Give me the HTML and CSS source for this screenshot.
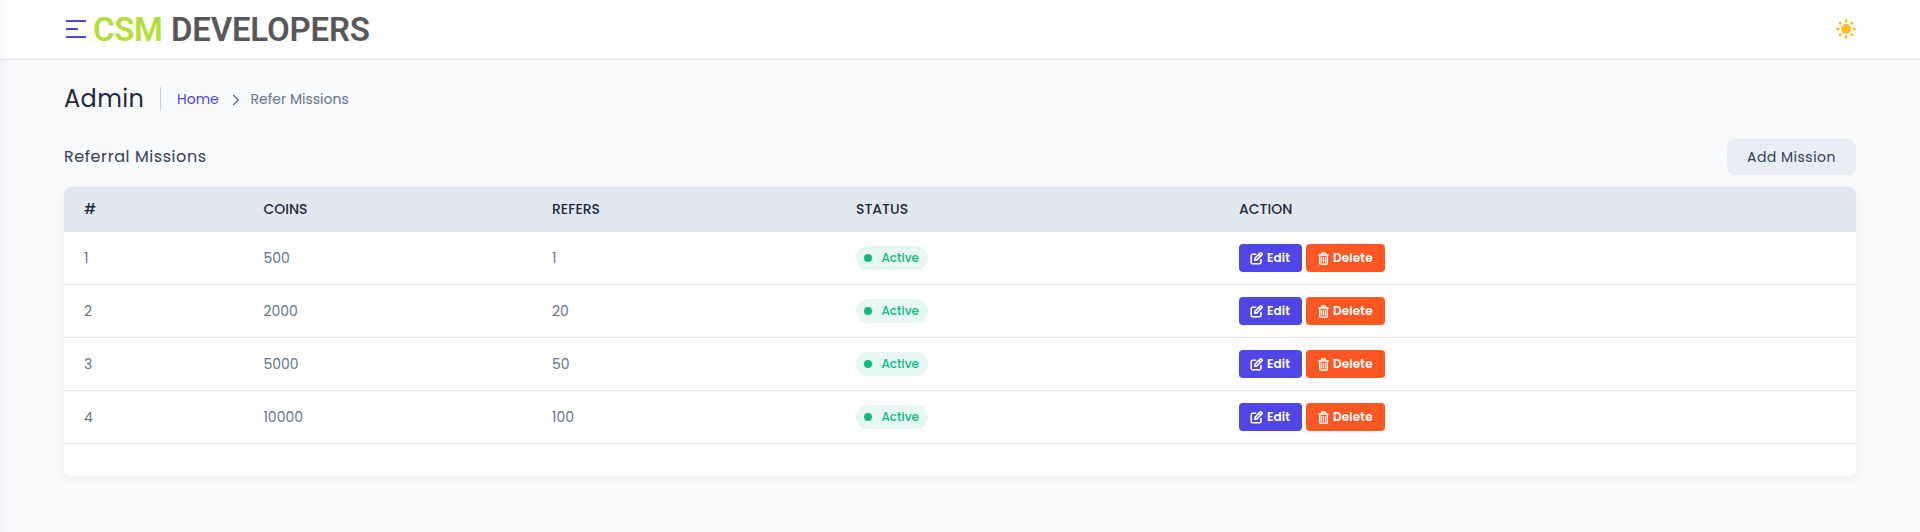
FILE: index.html
```html
<!DOCTYPE html>
<html lang="en">
<head>
<meta charset="utf-8">
<title>Refer Missions</title>
<link rel="stylesheet" href="styles.css">
</head>
<body>
<svg class="sprite" aria-hidden="true">
  <symbol id="edit" viewBox="0 0 16 16" fill="none" stroke="currentColor" stroke-width="1.9" stroke-linecap="round" stroke-linejoin="round">
    <path d="M7 2.8H3.2A1.7 1.7 0 0 0 1.5 4.5v8.3a1.7 1.7 0 0 0 1.7 1.7h8.6a1.7 1.7 0 0 0 1.7-1.7V9.3"/>
    <path d="M5.8 10.2l.5-2.7 6.1-6.1a1.25 1.25 0 0 1 1.8 0l.4.4a1.25 1.25 0 0 1 0 1.8L8.5 9.7z M11 3l2 2"/>
  </symbol>
  <symbol id="trash" viewBox="0 0 14 16" fill="none" stroke="currentColor" stroke-width="1.9" stroke-linecap="round" stroke-linejoin="round">
    <path d="M1 3.6h12M4 3.4l1-2.3h4l1 2.3M2.2 4v9.6a1.6 1.6 0 0 0 1.6 1.6h6.4a1.6 1.6 0 0 0 1.6-1.6V4"/>
    <path d="M4.8 6.5v6M7 6.5v6M9.2 6.5v6" stroke-width="1.3"/>
  </symbol>
</svg>
<div class="edge"></div>
<header class="topbar">
  <div class="brand">
    <span class="burger"><i></i><i class="short"></i><i></i></span>
    <div class="logo"><span class="csm">CSM</span><span class="dev">DEVELOPERS</span></div>
  </div>
  <svg class="sun" viewBox="0 0 20 20" fill="#fbbd23">
    <circle cx="10" cy="10" r="5"/>
    <g stroke="#fbbd23" stroke-width="2.5" stroke-linecap="round">
      <path d="M10 1.4v1M10 17.6v1M1.4 10h1M17.6 10h1M4 4l.5.5M15.5 15.5l.5.5M4 16l.5-.5M15.5 4.5l.5-.5"/>
    </g>
  </svg>
</header>
<main>
  <div class="crumbs">
    <h1>Admin</h1>
    <span class="rule"></span>
    <a class="home">Home</a>
    <svg class="chevron" viewBox="0 0 8 12" fill="none" stroke="#64748b" stroke-width="1.4" stroke-linecap="round" stroke-linejoin="round"><path d="M1.5 1.2L6.3 6l-4.8 4.8"/></svg>
    <span class="here">Refer Missions</span>
  </div>
  <div class="heading">
    <h2>Referral Missions</h2>
    <button class="add"><span>Add Mission</span></button>
  </div>
  <section class="card">
    <div class="row head"><span>#</span><span class="coins">COINS</span><span class="refers">REFERS</span><span class="status">STATUS</span><span class="action">ACTION</span></div>
    <div class="row"><span>1</span><span>500</span><span>1</span><span><b class="badge"><i></i>Active</b></span><span class="btns"><b class="btn edit"><svg><use href="#edit"/></svg>Edit</b><b class="btn delete"><svg><use href="#trash"/></svg>Delete</b></span></div>
    <div class="row"><span>2</span><span>2000</span><span>20</span><span><b class="badge"><i></i>Active</b></span><span class="btns"><b class="btn edit"><svg><use href="#edit"/></svg>Edit</b><b class="btn delete"><svg><use href="#trash"/></svg>Delete</b></span></div>
    <div class="row"><span>3</span><span>5000</span><span>50</span><span><b class="badge"><i></i>Active</b></span><span class="btns"><b class="btn edit"><svg><use href="#edit"/></svg>Edit</b><b class="btn delete"><svg><use href="#trash"/></svg>Delete</b></span></div>
    <div class="row"><span>4</span><span>10000</span><span>100</span><span><b class="badge"><i></i>Active</b></span><span class="btns"><b class="btn edit"><svg><use href="#edit"/></svg>Edit</b><b class="btn delete"><svg><use href="#trash"/></svg>Delete</b></span></div>
  </section>
</main>
</body>
</html>
```
FILE: styles.css
```css
* { box-sizing: border-box; }
body { margin: 0; height: 532px; overflow: hidden; background: #f8fafc; font-family: Poppins, Inter, sans-serif; font-size: 14px; color: #64748b; -webkit-font-smoothing: antialiased; }
h1, h2 { margin: 0; font-weight: 400; white-space: nowrap; }
.sprite { position: absolute; width: 0; height: 0; }
.edge { position: absolute; left: 0; top: 0; width: 12px; height: 532px; background: linear-gradient(90deg, rgba(60,70,90,.035), rgba(60,70,90,0)); }
.topbar { height: 60px; padding: 0 64px 0 66px; display: flex; justify-content: space-between; align-items: center; background: #fff; border-bottom: 1px solid #e5e8ee; }
.brand { display: flex; align-items: center; height: 58px; align-self: flex-start; }
.burger { width: 20px; height: 18px; display: flex; flex-direction: column; justify-content: space-between; margin-right: 7px; }
.burger i { height: 2px; background: #4f46e5; }
.burger .short { width: 12px; }
.logo { display: flex; padding-top: 2px; font: 600 33px/40px Roboto, sans-serif; white-space: nowrap; }
.csm { width: 78px; color: #b3df38; letter-spacing: -.4px; }
.dev { color: #58585a; letter-spacing: -.2px; }
.sun { width: 20px; height: 20px; margin-top: -1px; }
main { padding: 0 64px; }
.crumbs { height: 79px; display: flex; align-items: center; }
h1 { width: 96px; font-size: 24px; line-height: 32px; margin-top: -1px; color: #1e293b; letter-spacing: .4px; }
.rule { width: 1px; height: 24px; background: #cbd5e1; margin: -2px 16px 0 0; }
.home { width: 54.5px; color: #4f46e5; }
.chevron { width: 8px; height: 12px; margin-right: 11px; }
.heading { height: 36px; display: flex; justify-content: space-between; align-items: center; }
h2 { font-size: 16px; line-height: 24px; margin-top: -1px; color: #334155; letter-spacing: .57px; }
.add { width: 129px; height: 36px; padding: 0; border: 0; border-radius: 8px; background: #e9edf4; color: #334155; font: 400 14px/20px Poppins, Inter, sans-serif; letter-spacing: .5px; white-space: nowrap; }
.card { height: 289px; margin-top: 12px; border-radius: 8px; background: #fff; overflow: hidden; box-shadow: 0 3px 10px rgba(48,46,56,.06); }
.row { height: 53px; display: grid; grid-template-columns: 179.4px 288.6px 304px 383px 1fr; align-items: center; padding-left: 20px; border-bottom: 1px solid #e2e8f0; }
.head { height: 45px; border: 0; background: #e2e8f0; color: #1e293b; font-weight: 500; }
.badge { display: inline-flex; width: 72px; height: 24px; align-items: center; border-radius: 12px; padding-left: 8px; background: #e7f8f2; color: #10b981; font-size: 12px; font-weight: 500; vertical-align: middle; }
.badge i { width: 8px; height: 8px; border-radius: 50%; background: #10b981; margin-right: 9.5px; }
.btns { display: flex; gap: 4px; }
.btn { height: 28px; border-radius: 4px; display: flex; align-items: center; color: #fff; font-size: 12px; font-weight: 600; letter-spacing: .15px; }
.btn svg { height: 13px; flex: none; }
.edit { width: 63px; padding-left: 11px; background: #4f46e5; }
.edit svg { width: 13px; margin-right: 4px; }
.delete { width: 79px; padding-left: 12px; background: #ff5724; }
.delete svg { width: 11px; margin-right: 4px; }
```
